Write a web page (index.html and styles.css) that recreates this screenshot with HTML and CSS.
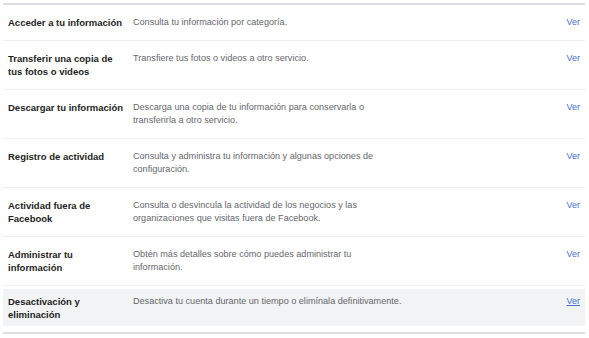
FILE: index.html
```html
<!DOCTYPE html>
<html lang="es">
<head>
    <meta charset="UTF-8">
    <meta name="viewport" content="width=device-width, initial-scale=1.0">
    <title>Tu información de Facebook</title>
    <link rel="stylesheet" href="styles.css">
</head>
<body>
    <div class="settings-list">
        <div class="row">
            <div class="item">
                <div class="title">Acceder a tu información</div>
                <div class="desc">Consulta tu información por categoría.</div>
                <a class="link" href="#">Ver</a>
            </div>
        </div>
        <div class="row">
            <div class="item">
                <div class="title">Transferir una copia de tus fotos o videos</div>
                <div class="desc">Transfiere tus fotos o videos a otro servicio.</div>
                <a class="link" href="#">Ver</a>
            </div>
        </div>
        <div class="row">
            <div class="item">
                <div class="title">Descargar tu información</div>
                <div class="desc">Descarga una copia de tu información para conservarla o transferirla a otro servicio.</div>
                <a class="link" href="#">Ver</a>
            </div>
        </div>
        <div class="row">
            <div class="item">
                <div class="title">Registro de actividad</div>
                <div class="desc">Consulta y administra tu información y algunas opciones de configuración.</div>
                <a class="link" href="#">Ver</a>
            </div>
        </div>
        <div class="row">
            <div class="item">
                <div class="title">Actividad fuera de Facebook</div>
                <div class="desc">Consulta o desvincula la actividad de los negocios y las organizaciones que visitas fuera de Facebook.</div>
                <a class="link" href="#">Ver</a>
            </div>
        </div>
        <div class="row">
            <div class="item">
                <div class="title">Administrar tu información</div>
                <div class="desc">Obtén más detalles sobre cómo puedes administrar tu<br>información.</div>
                <a class="link" href="#">Ver</a>
            </div>
        </div>
        <div class="row is-hover">
            <div class="item">
                <div class="title">Desactivación y eliminación</div>
                <div class="desc">Desactiva tu cuenta durante un tiempo o elimínala definitivamente.</div>
                <a class="link" href="#">Ver</a>
            </div>
        </div>
    </div>
</body>
</html>
```

FILE: styles.css
```css
body {
    font-family: 'Liberation Sans', Arial, sans-serif;
    background: #fff;
    margin: 0;
    padding: 0;
}

.settings-list {
    margin: 3px 4px 0 3px;
    border-top: 2px solid #dddfe2;
    border-bottom: 2px solid #dddfe2;
}

.row {
    padding: 4px 0;
    border-bottom: 1px solid #eceef1;
}

.row:last-child {
    border-bottom: none;
}

.item {
    display: flex;
    align-items: flex-start;
    padding: 7px 5px;
    line-height: 13px;
}

.title {
    width: 120px;
    margin-right: 5px;
    font-size: 9.5px;
    font-weight: bold;
    color: #1c1e21;
}

.desc {
    width: 272px;
    font-size: 9.1px;
    color: #65676b;
}

.link {
    margin-left: auto;
    font-size: 9px;
    color: #4a6fcf;
    text-decoration: none;
}

.is-hover {
    padding: 3px 0 6px;
}

.is-hover .item {
    background: #f2f3f5;
    padding: 6px 5px 5px;
}

.is-hover .link {
    text-decoration: underline;
}
```
